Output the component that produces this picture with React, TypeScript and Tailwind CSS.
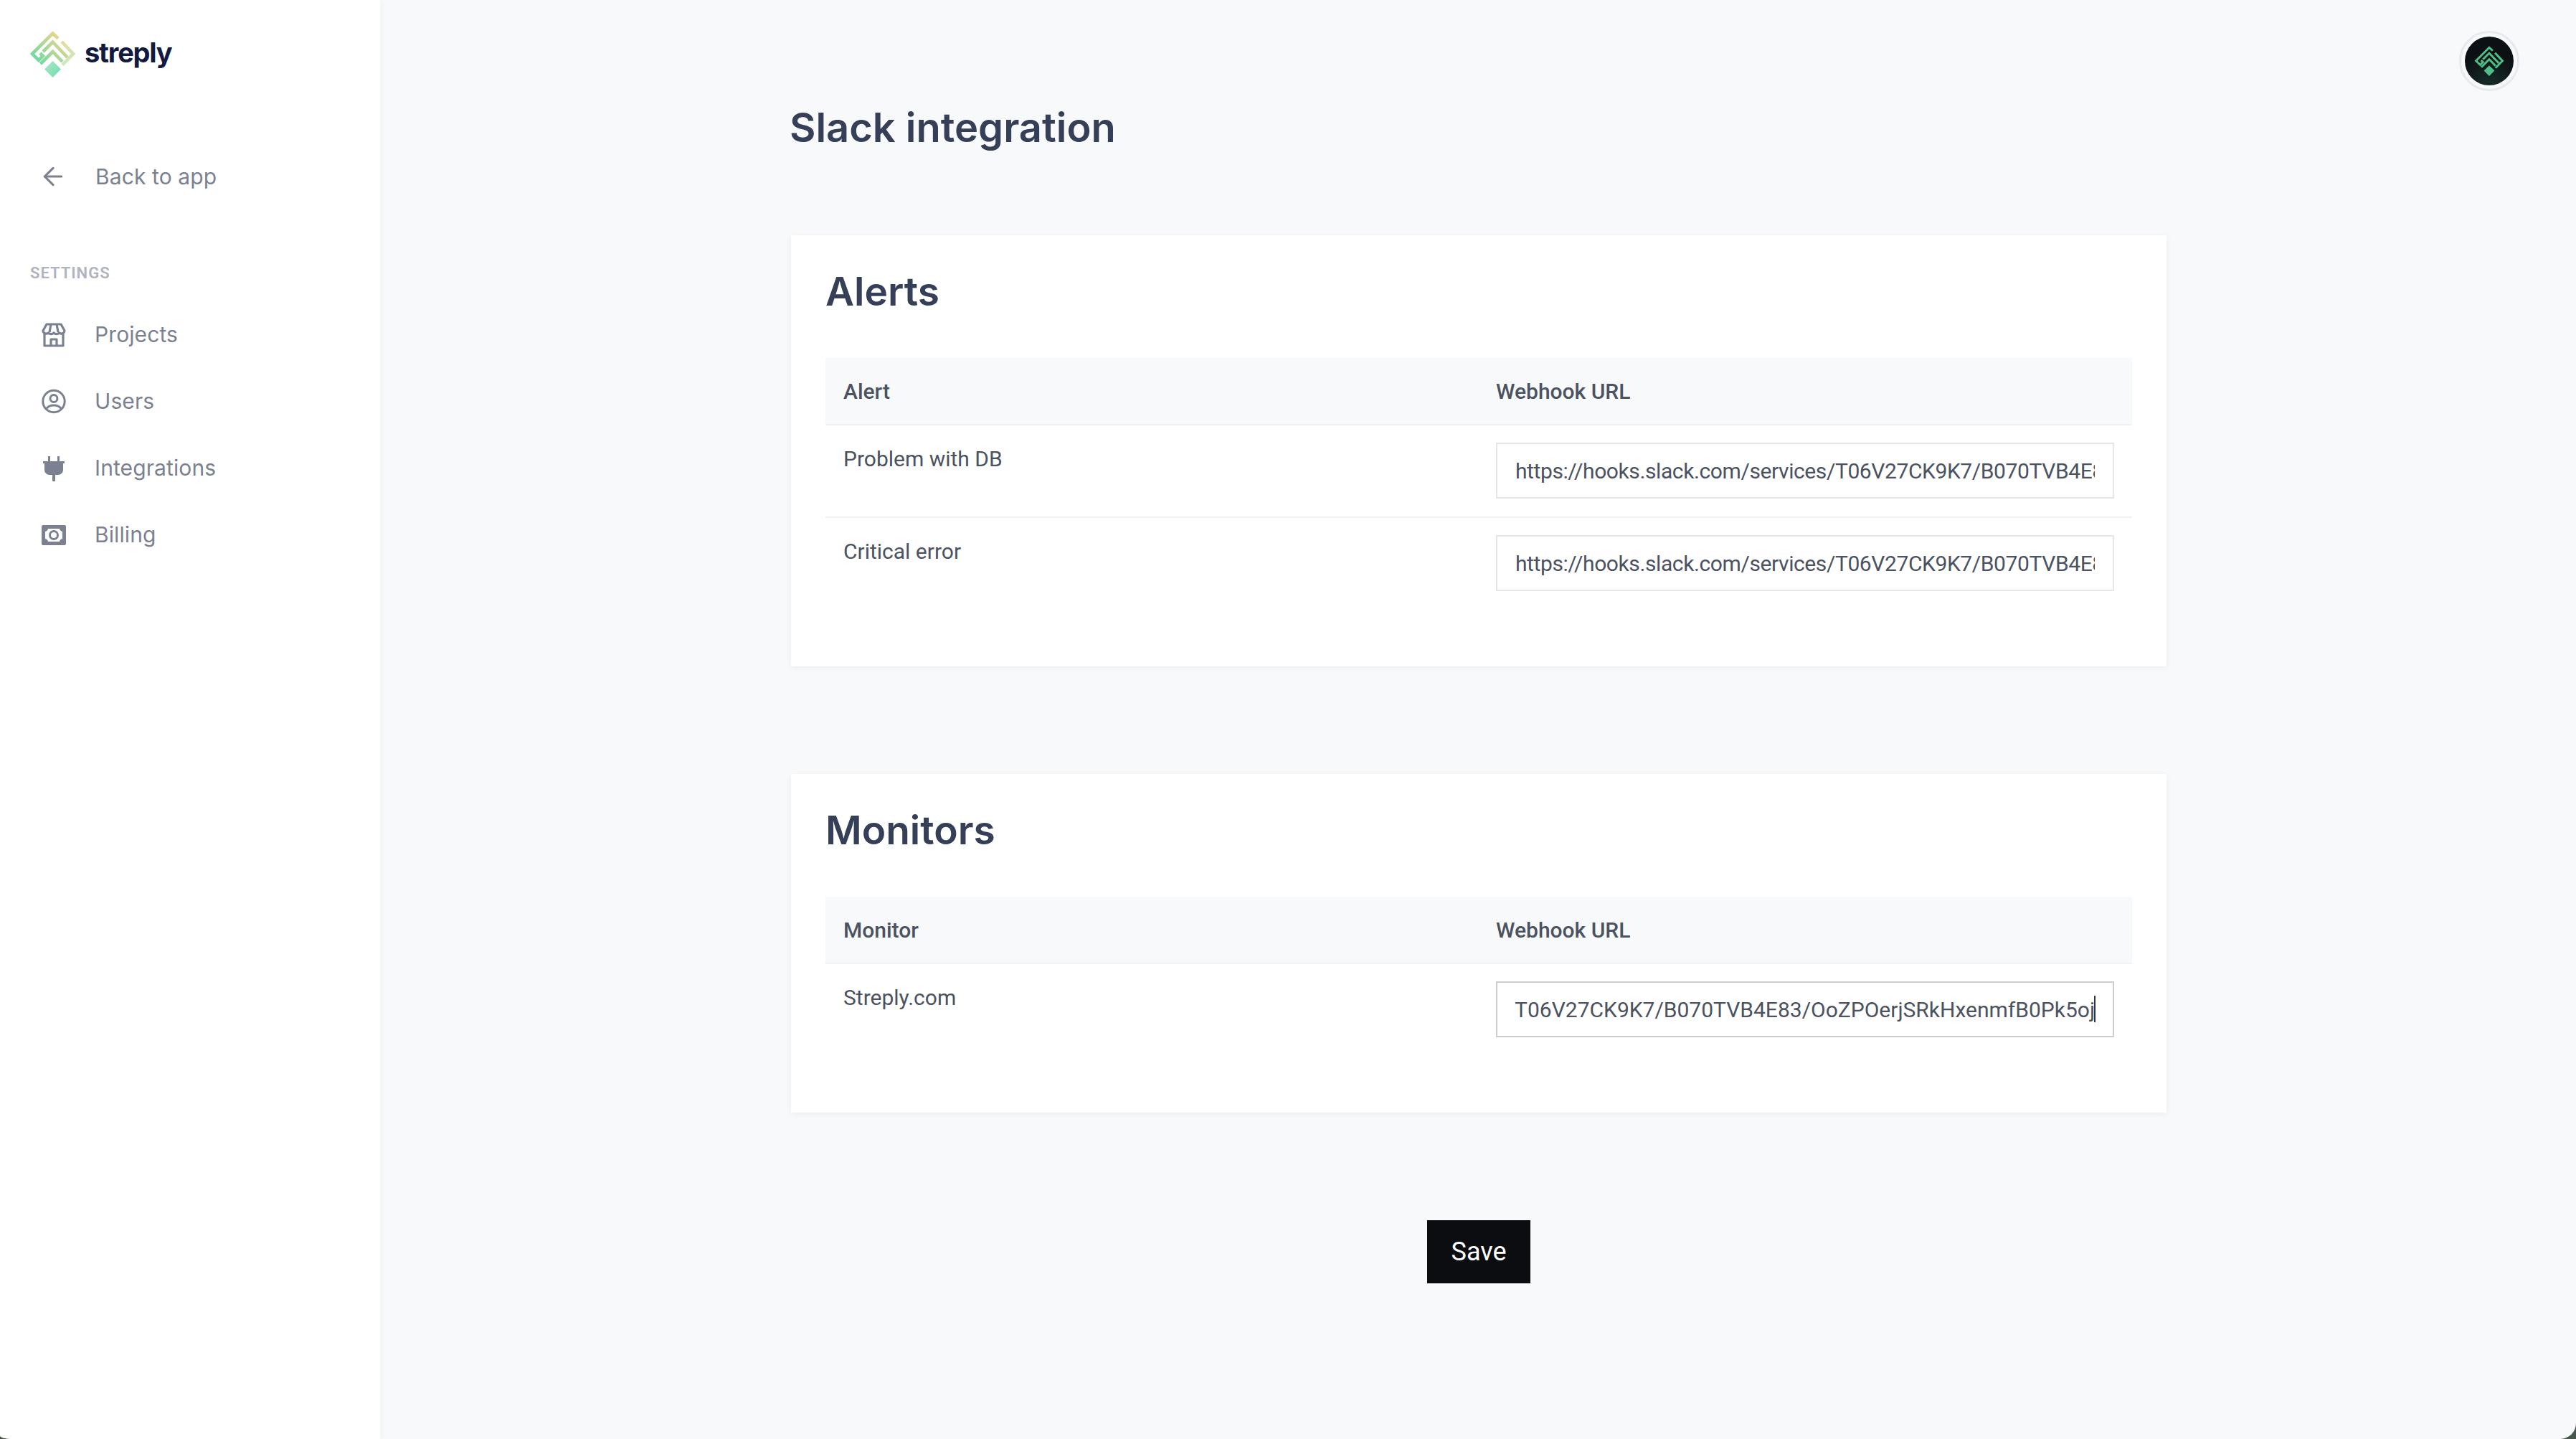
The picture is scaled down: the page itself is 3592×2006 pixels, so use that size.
import { useEffect, useRef } from 'react';
import { ArrowLeft } from 'lucide-react';

const heading = "font-['Inter',sans-serif]";
const body = "font-['Roboto',sans-serif]";

const alerts = [
  { name: 'Problem with DB', url: 'https://hooks.slack.com/services/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' },
  { name: 'Critical error', url: 'https://hooks.slack.com/services/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' },
];

const monitors = [
  { name: 'Streply.com', url: 'https://hooks.slack.com/services/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', focused: true },
];

function LogoMark({ gradient, className }: { gradient: boolean; className: string }) {
  const main = gradient ? 'url(#logo-lines)' : '#4fbe86';
  const side = gradient ? 'url(#logo-side)' : '#4fbe86';
  const fill = gradient ? 'url(#logo-tip)' : '#4fbe86';
  return (
    <svg viewBox="0 0 65 65" className={className}>
      <defs>
        <linearGradient id="logo-lines" gradientUnits="userSpaceOnUse" x1="6" y1="44" x2="40" y2="6">
          <stop offset="0" stopColor="#66d9a2" />
          <stop offset="1" stopColor="#e6d68f" />
        </linearGradient>
        <linearGradient id="logo-side" gradientUnits="userSpaceOnUse" x1="46" y1="14" x2="50" y2="48">
          <stop offset="0" stopColor="#e6da9c" />
          <stop offset="1" stopColor="#c4ecc4" />
        </linearGradient>
        <linearGradient id="logo-tip" x1="0" y1="0" x2="1" y2="1">
          <stop offset="0" stopColor="#a9e8c8" />
          <stop offset="1" stopColor="#72ddac" />
        </linearGradient>
      </defs>
      <g fill="none" strokeWidth="4.6">
        <path stroke={main} d="M40 10.500 32.500 3.500 4 32 13 41 19 35 15 31" />
        <path stroke={side} d="M45 15 61 32 46 47.500" />
        <path stroke={main} d="M19 29 32.500 15.500 53 37" />
        <path stroke={main} d="M15.500 46 32.500 29 46 43" />
      </g>
      <path d="M32.500 42 44 53.500 32.500 65 21 53.500Z" fill={fill} />
    </svg>
  );
}

function StoreIcon() {
  return (
    <svg viewBox="0 0 34 34" fill="none" stroke="#7b8191" strokeWidth="3.2" strokeLinejoin="round" className="h-[34px] w-[34px]">
      <path d="M7 2h20l5 9a4.500 4.500 0 0 1-7.500 3 5 5 0 0 1-7.500 0 5 5 0 0 1-7.500 0A4.500 4.500 0 0 1 2 11Z" />
      <path d="M13 2 11 13M21 2l2 11" />
      <path d="M4 15v17h26V15" />
      <path d="M13 32v-9h8v9" />
    </svg>
  );
}

function UserIcon() {
  return (
    <svg viewBox="0 0 34 34" fill="none" stroke="#7b8191" strokeWidth="3" className="h-[35px] w-[34px]">
      <circle cx="17" cy="17" r="15.200" />
      <circle cx="17" cy="13" r="5" />
      <path d="M6.500 27.500C9 23.500 13 22.500 17 22.500s8 1 10.500 5" />
    </svg>
  );
}

function PlugIcon() {
  return (
    <svg viewBox="0 0 34 36" fill="#7b8191" className="h-[36px] w-[34px]">
      <path d="M9 1h3v7H9zM22 1h3v7h-3z" />
      <path d="M2 8h30v3h-2v9a7 7 0 0 1-7 7h-4v9h-4v-9h-4a7 7 0 0 1-7-7v-9H2z" />
    </svg>
  );
}

function CashIcon() {
  return (
    <svg viewBox="0 0 34 28" className="h-[28px] w-[34px]">
      <path
        fill="#7b8191"
        fillRule="evenodd"
        d="M2 0h30a2 2 0 0 1 2 2v24a2 2 0 0 1-2 2H2a2 2 0 0 1-2-2V2a2 2 0 0 1 2-2Zm7 5a5 5 0 0 1-4 4v10a5 5 0 0 1 4 4h16a5 5 0 0 1 4-4V9a5 5 0 0 1-4-4Z"
      />
      <circle cx="17" cy="14" r="5.500" fill="none" stroke="#7b8191" strokeWidth="3" />
    </svg>
  );
}

function NavItem({ icon, label }: { icon: React.ReactNode; label: string }) {
  return (
    <a className="flex h-[93px] items-center">
      <span className="flex w-[34px] justify-center">{icon}</span>
      <span className={`${heading} ml-[40px] text-[30px] tracking-[0.1px] text-[#7b8191]`}>{label}</span>
    </a>
  );
}

function UrlInput({ value, focused }: { value: string; focused?: boolean }) {
  const ref = useRef<HTMLInputElement>(null);

  // the monitor field is shown scrolled to its end, as after typing
  useEffect(() => {
    if (focused && ref.current) ref.current.scrollLeft = ref.current.scrollWidth;
  }, [focused]);

  return (
    <div className="relative">
      <input
        ref={ref}
        readOnly
        value={value}
        className={`${body} block h-[78px] w-[862px] border-2 bg-white px-[25px] text-[30px] text-[#4b5261] outline-none ${focused ? 'border-[#cbcdd2]' : 'border-[#e5e6eb] tracking-[-0.4px]'}`}
      />
      {focused && <span className="absolute right-[26px] top-[20px] h-[37px] w-[2px] bg-[#2d3340]" />}
    </div>
  );
}

function SettingsTable({ title, column, rows }: { title: string; column: string; rows: { name: string; url: string; focused?: boolean }[] }) {
  return (
    <section className="w-[1918px] bg-white px-[48px] pt-[46px] pb-[105px] shadow-[0_2px_8px_rgba(40,50,70,0.06)]">
      <h2 className={`${heading} text-[55px] leading-[64px] font-semibold text-[#354058]`}>{title}</h2>
      <div className="mt-[61px]">
        <div className={`${body} flex h-[94px] items-center border-b-2 border-[#f0f1f4] bg-[#f8f9fb] text-[30px] font-medium text-[#4b5261]`}>
          <span className="w-[935px] pl-[25px]">{column}</span>
          <span>Webhook URL</span>
        </div>
        {rows.map((row, index) => (
          <div key={row.name} className={`flex pt-[24px] ${index < rows.length - 1 ? 'h-[129px] border-b-2 border-[#f0f1f4]' : ''}`}>
            <span className={`${body} w-[935px] pl-[25px] text-[30px] leading-[46px] text-[#4b5261]`}>{row.name}</span>
            <UrlInput value={row.url} focused={row.focused} />
          </div>
        ))}
      </div>
    </section>
  );
}

export default function App() {
  return (
    <div className="h-[2006px] w-[3592px] overflow-hidden bg-[#47574e]">
      <div className="flex h-full overflow-hidden rounded-br-[22px] rounded-bl-[16px_5px] bg-[#f8f9fb]">
        <aside className="h-full w-[530px] shrink-0 bg-white pl-[41px] shadow-[2px_0_6px_rgba(40,50,70,0.04)]">
          <div className="flex h-[108px] items-end">
            <LogoMark gradient className="h-[65px] w-[65px]" />
            <span className={`${heading} mb-[11px] ml-[12px] text-[38px] leading-[48px] font-bold tracking-[-1.2px] text-[#121a3f]`}>streply</span>
          </div>
          <a className="mt-[90px] flex h-[96px] items-center">
            <ArrowLeft size={40} strokeWidth={1.9} color="#7b8191" className="ml-[13px]" />
            <span className={`${heading} ml-[39px] text-[30px] tracking-[0.1px] text-[#7b8191]`}>Back to app</span>
          </a>
          <div className={`${body} mt-[74px] pl-[1px] text-[22px] leading-[26px] font-semibold tracking-[1px] text-[#b0b3c0]`}>SETTINGS</div>
          <nav className="mt-[26px] flex flex-col pl-[17px]">
            <NavItem icon={<StoreIcon />} label="Projects" />
            <NavItem icon={<UserIcon />} label="Users" />
            <NavItem icon={<PlugIcon />} label="Integrations" />
            <NavItem icon={<CashIcon />} label="Billing" />
          </nav>
        </aside>

        <main className="relative flex min-w-0 flex-1 flex-col items-center pl-[2px]">
          <div className="absolute right-[79px] top-[43px] flex h-[84px] w-[84px] items-center justify-center rounded-full border-[3px] border-[#e8e9ec]">
            <div className="flex h-[68px] w-[68px] items-center justify-center rounded-full bg-[radial-gradient(circle_at_50%_110%,#17302a,#0c0f14_65%)]">
              <LogoMark gradient={false} className="h-[42px] w-[42px]" />
            </div>
          </div>

          <div className="w-[1918px]">
            <h1 className={`${heading} mt-[142px] -ml-[2px] text-[56px] leading-[72px] font-semibold text-[#354058]`}>Slack integration</h1>
          </div>
          <div className="mt-[114px]">
            <SettingsTable title="Alerts" column="Alert" rows={alerts} />
          </div>
          <div className="mt-[150px]">
            <SettingsTable title="Monitors" column="Monitor" rows={monitors} />
          </div>
          <button className={`${body} mt-[150px] h-[88px] w-[144px] bg-[#0b0d11] text-[36px] text-white`}>Save</button>
        </main>
      </div>
    </div>
  );
}
